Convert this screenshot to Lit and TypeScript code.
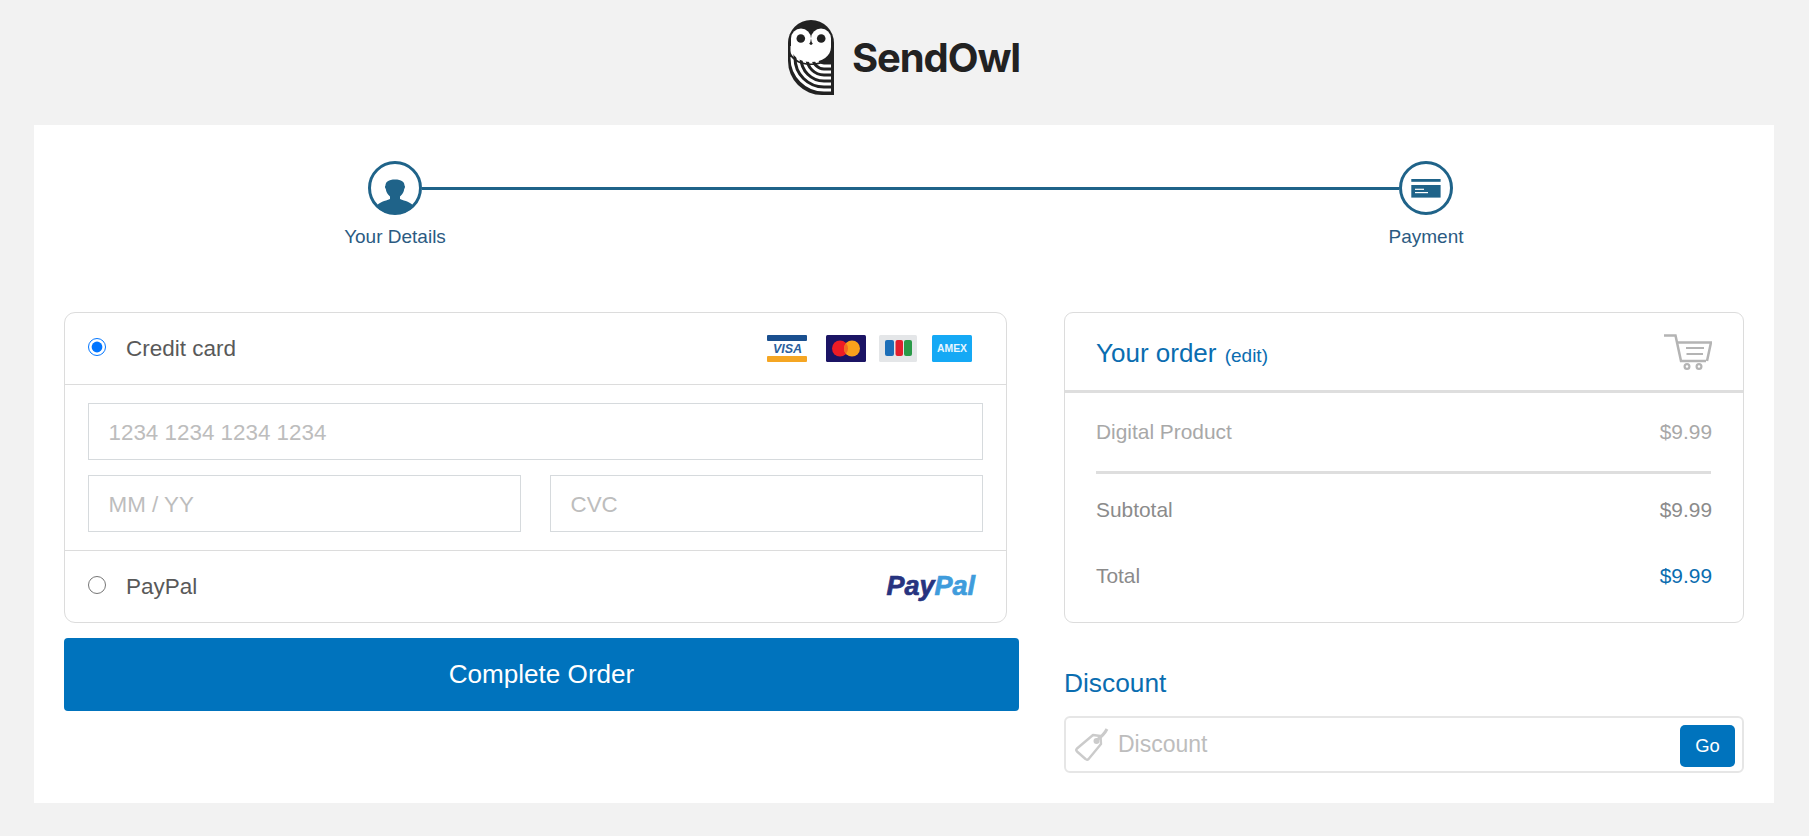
import { LitElement, html, css } from "lit";
import { customElement } from "lit/decorators.js";

const owl = html`<svg class="owl" viewBox="0 0 46 75" aria-hidden="true">
  <path d="M0 23A23 23 0 0 1 46 23V75H34A34 34 0 0 1 0 41Z" fill="#222"/>
  <g fill="none" stroke="#fff" stroke-width="3">
    <path d="M4 26V38A32 32 0 0 0 36 70H43"/>
    <path d="M10 26V38A26 26 0 0 0 36 64H43"/>
    <path d="M16 26V38A20 20 0 0 0 36 58H43"/>
    <path d="M22 26V38A14 14 0 0 0 36 52H43"/>
    <path d="M28 26V38A8 8 0 0 0 36 46H43"/>
  </g>
  <path d="M1.500 27C1.500 37 11 43.500 23 43.500C35 43.500 44.500 37 44.500 27V40H40C36 43.500 30 45 23 45C15 45 8 43 3 37H1.500Z" fill="#222"/>
  <path d="M3 18.500V27C3 36 12 42 23 42C34 42 43 36 43 27V18.500H33L23 25L13 18.500Z" fill="#fff"/>
  <circle cx="13" cy="18.500" r="10" fill="#fff"/>
  <circle cx="33" cy="18.500" r="10" fill="#fff"/>
  <circle cx="12.800" cy="18.500" r="4.300" fill="#222"/>
  <circle cx="33.200" cy="18.500" r="4.300" fill="#222"/>
</svg>`;

const person = html`<svg class="ico" viewBox="0 0 54 54" aria-hidden="true">
  <circle cx="27" cy="27" r="25.500" fill="#fff" stroke="#1f6389" stroke-width="3"/>
  <path d="M8 45.500C11 41 17 40 22 38V35.500C19.500 33.500 18 30.500 17.800 28C16.800 27 16.800 25 17.500 24.500C17.500 21 20.500 18.500 27 18.500C33.500 18.500 36.500 21 36.500 24.500C37.200 25 37.200 27 36.200 28C36 30.500 34.500 33.500 32 35.500V38C37 40 43 41 46 45.500C41 50.500 34.500 53 27 53C19.500 53 13 50.500 8 45.500Z" fill="#1f6389"/>
</svg>`;

const cardIco = html`<svg class="ico" viewBox="0 0 54 54" aria-hidden="true">
  <circle cx="27" cy="27" r="25.500" fill="#fff" stroke="#1f6389" stroke-width="3"/>
  <rect x="12.300" y="18" width="29.300" height="2.800" fill="#1f6389"/>
  <rect x="12.300" y="24" width="29.300" height="12.600" fill="#1f6389"/>
  <rect x="16" y="27.700" width="9" height="1.200" fill="#fff"/>
  <rect x="16" y="31" width="13" height="1.200" fill="#fff"/>
</svg>`;

const visa = html`<svg class="brand visa" viewBox="0 0 40 27" aria-hidden="true">
  <rect x="0" y="0" width="40" height="6" rx="1" fill="#1a4f8f"/>
  <rect x="0" y="21" width="40" height="6" rx="1" fill="#f5a623"/>
  <text x="20.500" y="18" text-anchor="middle" font-family="Liberation Sans" font-weight="700" font-style="italic" font-size="12.500" fill="#2a5f9e">VISA</text>
</svg>`;
const mc = html`<svg class="brand mc" viewBox="0 0 40 27" aria-hidden="true">
  <rect width="40" height="27" rx="1.500" fill="#1b1464"/>
  <circle cx="14" cy="13.500" r="8" fill="#ee1c25"/>
  <circle cx="26" cy="13.500" r="8" fill="#f9a11b"/>
  <path d="M20 8.200A8 8 0 0 1 20 18.800A8 8 0 0 1 20 8.200Z" fill="#f26b21"/>
</svg>`;
const jcb = html`<svg class="brand jcb" viewBox="0 0 38 27" aria-hidden="true">
  <rect width="38" height="27" rx="1.500" fill="#e4e6e8"/>
  <rect x="6" y="5" width="9" height="16" rx="2" fill="#1d6fb8"/>
  <rect x="16.500" y="5" width="7.500" height="16" rx="2" fill="#e3202e"/>
  <rect x="25" y="5" width="8" height="16" rx="2" fill="#2a9a48"/>
</svg>`;
const amex = html`<svg class="brand" viewBox="0 0 40 27" aria-hidden="true">
  <rect width="40" height="27" rx="1.500" fill="#15a9f5"/>
  <text x="20" y="17.200" text-anchor="middle" font-family="Liberation Sans" font-weight="700" font-size="10.400" fill="#e6f6ff">AMEX</text>
</svg>`;

const cart = html`<svg class="cart" viewBox="0 0 48 36" aria-hidden="true" fill="none" stroke="#b4b4b4">
  <path d="M0 1.500H11.500L17 27H42" stroke-width="2.500"/>
  <path d="M14 8.500H47L43 27" stroke-width="2.500"/>
  <path d="M22 14H40M22.500 20H39" stroke-width="2.200"/>
  <circle cx="23" cy="32.500" r="2.400" stroke-width="2.200"/>
  <circle cx="35" cy="32.500" r="2.400" stroke-width="2.200"/>
</svg>`;

const tag = html`<svg class="tag" viewBox="0 0 34 34" aria-hidden="true" fill="none" stroke="#cbcbcb" stroke-width="2.400">
  <path d="M18 7L25.500 8L26 16L14 30.500C13 32 11.500 32 10.500 31L2 23.500C1 22.500 1 21.500 2 20.500Z" stroke-linejoin="round"/>
  <circle cx="21.500" cy="13" r="1.800" fill="#cbcbcb"/>
  <path d="M22 12C26 9 30 5 32 1" stroke-width="3"/>
</svg>`;

@customElement("app-root")
export class AppRoot extends LitElement {
  static styles = css`
    :host {
      display: block;
      min-height: 836px;
      background: #f2f2f2;
      font-family: "Liberation Sans", Arial, sans-serif;
      box-sizing: border-box;
      padding: 0 35px 33px 34px;
    }
    * { box-sizing: border-box; }
    .top {
      height: 125px;
      display: flex;
      justify-content: center;
      align-items: flex-start;
      gap: 18px;
      padding-top: 20px;
    }
    .owl { width: 46px; height: 75px; display: block; flex: none; }
    .word {
      font-family: Inter, sans-serif;
      font-weight: 700;
      font-size: 40px;
      line-height: 48px;
      margin-top: 14px;
      color: #222;
      letter-spacing: -1.100px;
    }
    .panel { background: #fff; height: 678px; padding: 36px 30px 0; }
    .steps {
      display: grid;
      grid-template-columns: 120px 1fr 120px;
      padding: 0 258px 0 271px;
      height: 151px;
    }
    .step {
      display: flex;
      flex-direction: column;
      align-items: center;
      gap: 11px;
      color: #2b5b82;
      font-size: 19px;
      line-height: 22px;
      white-space: nowrap;
    }
    .ico { width: 54px; height: 54px; display: block; }
    .line {
      height: 3px;
      background: #1f6389;
      margin: 26px -33px 0;
    }
    .cols { display: flex; gap: 45px; align-items: flex-start; }
    .left { width: 955px; flex: none; }
    .right { width: 680px; flex: none; }
    .card {
      width: 943px;
      height: 311px;
      border: 1px solid #dcdcdc;
      border-radius: 11px;
    }
    .pay {
      display: flex;
      align-items: center;
      padding: 0 31px 0 23px;
      color: #595959;
      font-size: 22.500px;
    }
    .pay.credit { height: 72px; border-bottom: 1px solid #dcdcdc; padding-right: 34px; }
    .pay.paypal { height: 71px; }
    .radio {
      width: 18px;
      height: 18px;
      margin: 0 20px 3px 0;
      flex: none;
      accent-color: #0075ff;
    }
    .pay .name { flex: 1; }
    .brands { display: flex; align-items: center; }
    .brand { width: 40px; height: 27px; display: block; }
    .brand.visa { margin-right: 19px; }
    .brand.mc { margin-right: 13px; }
    .brand.jcb { width: 38px; margin-right: 15px; }
    .fields {
      height: 166px;
      padding: 18px 23px 0;
      border-bottom: 1px solid #dcdcdc;
      display: grid;
      grid-template-columns: 1fr 1fr;
      grid-template-rows: 57px 57px;
      column-gap: 29px;
      row-gap: 15px;
    }
    .box {
      border: 1px solid #d6dadd;
      color: #bdbdbd;
      font-size: 22.400px;
      display: flex;
      align-items: center;
      padding: 2px 0 0 19.500px;
    }
    .box.wide { grid-column: 1 / 3; }
    .pp {
      font-weight: 700;
      font-style: italic;
      font-size: 27px;
      color: #27337f;
      -webkit-text-stroke: 0.7px currentColor;
    }
    .pp span { color: #3f9cdc; }
    .cta {
      display: flex;
      align-items: center;
      justify-content: center;
      margin-top: 15px;
      height: 73px;
      background: #0073bd;
      color: #fff;
      font-size: 26.100px;
      border-radius: 4px;
    }
    .order {
      height: 311px;
      border: 1px solid #dcdcdc;
      border-radius: 9px;
    }
    .ohead {
      height: 80px;
      border-bottom: 3px solid #dedede;
      display: flex;
      align-items: center;
      padding: 3px 31px 0 31px;
      color: #0a6db0;
      font-size: 26px;
    }
    .ohead small { font-size: 19px; margin-left: 1px; }
    .ohead b { font-weight: 400; flex: 1; }
    .cart { width: 48px; height: 36px; display: block; margin: -3px 0 0; }
    .orow {
      display: flex;
      justify-content: space-between;
      padding: 0 31px;
      font-size: 20.900px;
      line-height: 24px;
    }
    .orow.product { color: #a8a8a8; padding-top: 27px; height: 78px; }
    .rule { height: 3px; background: #dedede; margin: 0 32px 0 31px; }
    .orow.sub { color: #8b8b8b; padding-top: 24px; height: 90px; }
    .orow.total { color: #8b8b8b; }
    .orow.total span + span { color: #0a6db0; }
    .dtitle {
      margin-top: 45px;
      color: #0a6db0;
      font-size: 26.300px;
      line-height: 30px;
    }
    .discount {
      margin-top: 18px;
      height: 57px;
      border: 2px solid #e6e6e6;
      border-radius: 6px;
      display: flex;
      align-items: center;
      padding: 0 7px 0 9px;
      color: #bdbdbd;
      font-size: 23px;
    }
    .tag { width: 34px; height: 34px; flex: none; margin-right: 9px; display: block; }
    .discount span { flex: 1; }
    .go {
      width: 55px;
      height: 42px;
      margin-top: 3px;
      border-radius: 5px;
      background: #0073bd;
      color: #fff;
      font-size: 18.400px;
      display: flex;
      align-items: center;
      justify-content: center;
    }
  `;

  render() {
    return html`
      <div class="top">${owl}<div class="word">SendOwl</div></div>
      <div class="panel">
        <div class="steps">
          <div class="step">${person}<span>Your Details</span></div>
          <div class="line"></div>
          <div class="step">${cardIco}<span>Payment</span></div>
        </div>
        <div class="cols">
          <div class="left">
            <div class="card">
              <div class="pay credit">
                <input class="radio" type="radio" name="pm" checked />
                <span class="name">Credit card</span>
                <div class="brands">${visa}${mc}${jcb}${amex}</div>
              </div>
              <div class="fields">
                <div class="box wide">1234 1234 1234 1234</div>
                <div class="box">MM / YY</div>
                <div class="box">CVC</div>
              </div>
              <div class="pay paypal">
                <input class="radio" type="radio" name="pm" />
                <span class="name">PayPal</span>
                <div class="pp">Pay<span>Pal</span></div>
              </div>
            </div>
            <div class="cta">Complete Order</div>
          </div>
          <div class="right">
            <div class="order">
              <div class="ohead"><b>Your order <small>(edit)</small></b>${cart}</div>
              <div class="orow product"><span>Digital Product</span><span>$9.99</span></div>
              <div class="rule"></div>
              <div class="orow sub"><span>Subtotal</span><span>$9.99</span></div>
              <div class="orow total"><span>Total</span><span>$9.99</span></div>
            </div>
            <div class="dtitle">Discount</div>
            <div class="discount">${tag}<span>Discount</span><div class="go">Go</div></div>
          </div>
        </div>
      </div>
    `;
  }
}
